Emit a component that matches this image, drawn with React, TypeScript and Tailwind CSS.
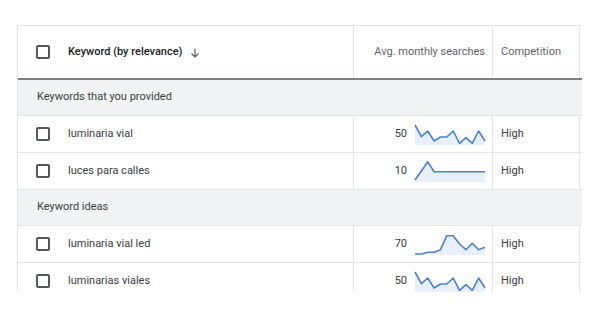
import React from 'react';

type Row = { keyword: string; avg: string; trend: number[]; competition: string };

const W = 70;
const H = 21;

const Sparkline = ({ data }: { data: number[] }) => {
  const step = W / (data.length - 1);
  const pts = data.map((y, i) => `${(i * step).toFixed(1)},${y}`).join(' ');
  return (
    <svg width={W} height={H} viewBox={`0 0 ${W} ${H}`} className='block overflow-visible'>
      <polygon points={`0,${H} ${pts} ${W},${H}`} fill='#e8f0fe' />
      <polyline points={pts} fill='none' stroke='#4a80de' strokeWidth='1.6' strokeLinejoin='round' />
    </svg>
  );
};

const Checkbox = () => <div className='h-[14px] w-[14px] rounded-[2px] border-2 border-[#55585c] bg-white' />;

const wavy = [1, 12.7, 7, 17, 13, 13, 7, 19.3, 13.7, 19.3, 7, 17];

const provided: Row[] = [
  { keyword: 'luminaria vial', avg: '50', trend: wavy, competition: 'High' },
  { keyword: 'luces para calles', avg: '10', trend: [19, 10, 0.8, 10.7, 10.7, 10.7, 10.7, 10.7, 10.7, 10.7, 10.7, 10.7], competition: 'High' },
];

const ideas: Row[] = [
  { keyword: 'luminaria vial led', avg: '70', trend: [20, 20, 18.3, 18.3, 15.7, 1.7, 1.7, 10, 15.7, 9.3, 15.7, 13.3], competition: 'High' },
  { keyword: 'luminarias viales', avg: '50', trend: wavy, competition: 'High' },
];

const cols = 'grid grid-cols-[336px_139px_86px_1fr]';

const DataRow = ({ row }: { row: Row }) => (
  <div className={`${cols} h-[37px] border-b border-[#e3e5e8] text-[11px] text-[#3c4043]`}>
    <div className='flex items-center border-r border-[#e3e5e8] pl-[18px]'>
      <Checkbox />
      <span className='ml-[18px]'>{row.keyword}</span>
    </div>
    <div className='flex items-center justify-end border-r border-[#e3e5e8] pr-[7px]'>
      <span className='mr-[8px]'>{row.avg}</span>
      <Sparkline data={row.trend} />
    </div>
    <div className='flex items-center pl-[8px]'>{row.competition}</div>
    <div className='border-l border-[#e3e5e8]' />
  </div>
);

const GroupRow = ({ label }: { label: string }) => (
  <div className='flex h-[36px] items-center border-b border-[#e3e5e8] bg-[#f1f3f4] pl-[19px] text-[11px] text-[#3c4043]'>
    {label}
  </div>
);

export default function App() {
  return (
    <div className='h-[326px] w-[599px] bg-white pl-[17px] pt-[25px]' style={{ fontFamily: 'Roboto, "Noto Sans", sans-serif' }}>
      <div className='h-[267px] w-[565px] overflow-hidden border-l border-t border-[#e3e5e8]'>
        <div className={`${cols} h-[54px] border-b-2 border-[#7c7f83] text-[11px]`}>
          <div className='flex items-center border-r border-[#e3e5e8] pl-[18px]'>
            <Checkbox />
            <span className='ml-[18px] font-medium text-[#202124]'>Keyword (by relevance)</span>
            <svg width='12' height='12' viewBox='0 0 12 12' className='ml-[7px] mt-[2px]'>
              <path d='M6 1.5v8.5M2.5 6.5L6 10l3.5-3.5' fill='none' stroke='#5f6368' strokeWidth='1.2' />
            </svg>
          </div>
          <div className='flex items-center justify-end border-r border-[#e3e5e8] pr-[7px] text-[#5f6368]'>
            Avg. monthly searches
          </div>
          <div className='flex items-center pl-[8px] text-[#5f6368]'>Competition</div>
          <div className='border-l border-[#e3e5e8]' />
        </div>
        <GroupRow label='Keywords that you provided' />
        {provided.map((r) => (
          <DataRow key={r.keyword} row={r} />
        ))}
        <GroupRow label='Keyword ideas' />
        {ideas.map((r) => (
          <DataRow key={r.keyword} row={r} />
        ))}
      </div>
    </div>
  );
}
